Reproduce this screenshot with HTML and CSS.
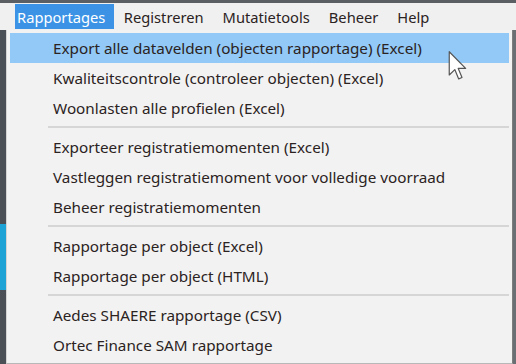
FILE: index.html
```html
<!DOCTYPE html>
<html lang="en">
<head>
  <meta charset="UTF-8">
  <title>Rapportages menu</title>
  <link rel="stylesheet" href="styles.css">
</head>
<body>
  <div class="top-edge"></div>

  <!-- Menubar -->
  <div class="menubar">
    <span class="menu-title active">Rapportages</span>
    <span class="menu-title">Registreren</span>
    <span class="menu-title">Mutatietools</span>
    <span class="menu-title">Beheer</span>
    <span class="menu-title">Help</span>
  </div>

  <div class="workspace">
    <div class="side-strip">
      <div class="side-accent"></div>
    </div>

    <!-- Dropdown -->
    <div class="dropdown">
      <div class="item hover">Export alle datavelden (objecten rapportage) (Excel)</div>
      <div class="item">Kwaliteitscontrole (controleer objecten) (Excel)</div>
      <div class="item">Woonlasten alle profielen (Excel)</div>
      <div class="separator"></div>
      <div class="item">Exporteer registratiemomenten (Excel)</div>
      <div class="item">Vastleggen registratiemoment voor volledige voorraad</div>
      <div class="item">Beheer registratiemomenten</div>
      <div class="separator"></div>
      <div class="item">Rapportage per object (Excel)</div>
      <div class="item">Rapportage per object (HTML)</div>
      <div class="separator"></div>
      <div class="item">Aedes SHAERE rapportage (CSV)</div>
      <div class="item">Ortec Finance SAM rapportage</div>

      <svg class="cursor" width="19" height="30" viewBox="0 0 12 20">
        <path d="M0.5 0.5 L0.5 16 L4.2 12.4 L6.8 18.6 L9 17.7 L6.5 11.6 L11.4 11.6 Z" fill="#fff" stroke="#555" stroke-width="0.8" stroke-linejoin="round"/>
      </svg>
    </div>

    <div class="side-strip right"></div>
  </div>
</body>
</html>
```

FILE: styles.css
```css
/* General styling */
body {
  margin: 0;
  width: 516px;
  height: 364px;
  overflow: hidden;
  background-color: #4d5258;
  font-family: "Noto Sans", Arial, sans-serif;
  color: #2b2222;
}

.top-edge {
  height: 3px;
  background-color: #5b5f64;
}

/* Menubar */
.menubar {
  display: flex;
  height: 27px;
  padding-left: 15px;
  background-color: #f0f0f0;
  font-size: 14.7px;
}

.menu-title {
  display: flex;
  align-items: center;
  padding: 0 9.5px;
  height: 25px;
  margin-top: 1px;
}

.menu-title.active {
  background-color: #3c93e6;
  color: #ffffff;
  padding: 0 9px 0 2px;
}

/* Area under the menubar */
.workspace {
  display: flex;
  height: 334px;
}

.side-strip {
  width: 6px;
  background-color: #4b5057;
}

.side-strip.right {
  width: 3px;
  background-color: #6a6f74;
}

.side-accent {
  margin-top: 194px;
  height: 66px;
  background-color: #1ea3d6;
}

/* Dropdown */
.dropdown {
  flex: 1;
  position: relative;
  padding: 3px;
  background-color: #f2f2f2;
  border-left: 1px solid #d4d4d4;
  border-right: 1px solid #7d7d7d;
  border-bottom: 1px solid #b8b8b8;
  font-size: 15.25px;
}

.item {
  height: 30px;
  line-height: 30px;
  padding-left: 43px;
  white-space: nowrap;
}

.item.hover {
  background-color: #92c9f6;
}

.separator {
  height: 9px;
  margin-left: 38px;
  background: linear-gradient(#f2f2f2 3px, #d6d6d6 3px, #d6d6d6 5px, #f2f2f2 5px);
}

.cursor {
  position: absolute;
  left: 441px;
  top: 21px;
}
```
